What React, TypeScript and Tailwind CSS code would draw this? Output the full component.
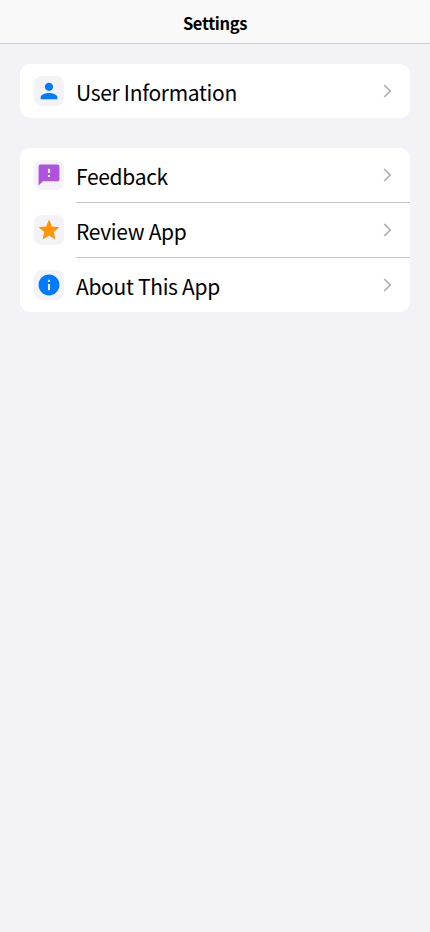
import type { IconType } from 'react-icons';
import { MdFeedback, MdInfo, MdPerson, MdStar } from 'react-icons/md';

type RowProps = { icon: IconType; color: string; label: string; divided?: boolean };

function Row({ icon: Icon, color, label, divided }: RowProps) {
  return (
    <li className={`flex pl-3.5 ${divided ? 'h-[55px]' : 'h-[54px]'}`}>
      <span className="mt-3 mr-3 flex size-[30px] shrink-0 items-center justify-center rounded-lg bg-[#f2f2f7]">
        <svg className={`size-[30px] ${color}`} viewBox="0 0 30 30">
          <Icon x="2.5" y="2.5" size={25} className="size-[25px]" />
        </svg>
      </span>
      <div className={`flex flex-1 justify-between pr-[18px] ${divided ? 'border-b border-[#c4c4c6]' : ''}`}>
        <span className="pt-3 text-[21px] leading-[33px] tracking-[-0.015em]">{label}</span>
        <svg className="mt-5 h-[14px] w-[9px] text-[#aeaeb2]" viewBox="0 0 9 14" fill="none" stroke="currentColor" strokeWidth="1.7">
          <path d="M1.2 1 L7.2 7 L1.2 13" />
        </svg>
      </div>
    </li>
  );
}

export default function App() {
  return (
    <div className="min-h-screen bg-[#f2f2f7] font-['Noto_Sans_CJK_JP','Noto_Sans',sans-serif] text-black">
      <header className="flex h-11 justify-center border-b border-[#d1d1d6] bg-[#f9f9f9]">
        <h1 className="pt-px text-[16.5px] leading-[44px] font-semibold tracking-[-0.02em]">Settings</h1>
      </header>
      <main className="flex flex-col gap-[30px] px-5 pt-5">
        <ul className="overflow-hidden rounded-[10px] bg-white">
          <Row icon={MdPerson} color="text-[#007aff]" label="User Information" />
        </ul>
        <ul className="overflow-hidden rounded-[10px] bg-white">
          <Row icon={MdFeedback} color="text-[#af52de]" label="Feedback" divided />
          <Row icon={MdStar} color="text-[#ff9500]" label="Review App" divided />
          <Row icon={MdInfo} color="text-[#007aff]" label="About This App" />
        </ul>
      </main>
    </div>
  );
}
